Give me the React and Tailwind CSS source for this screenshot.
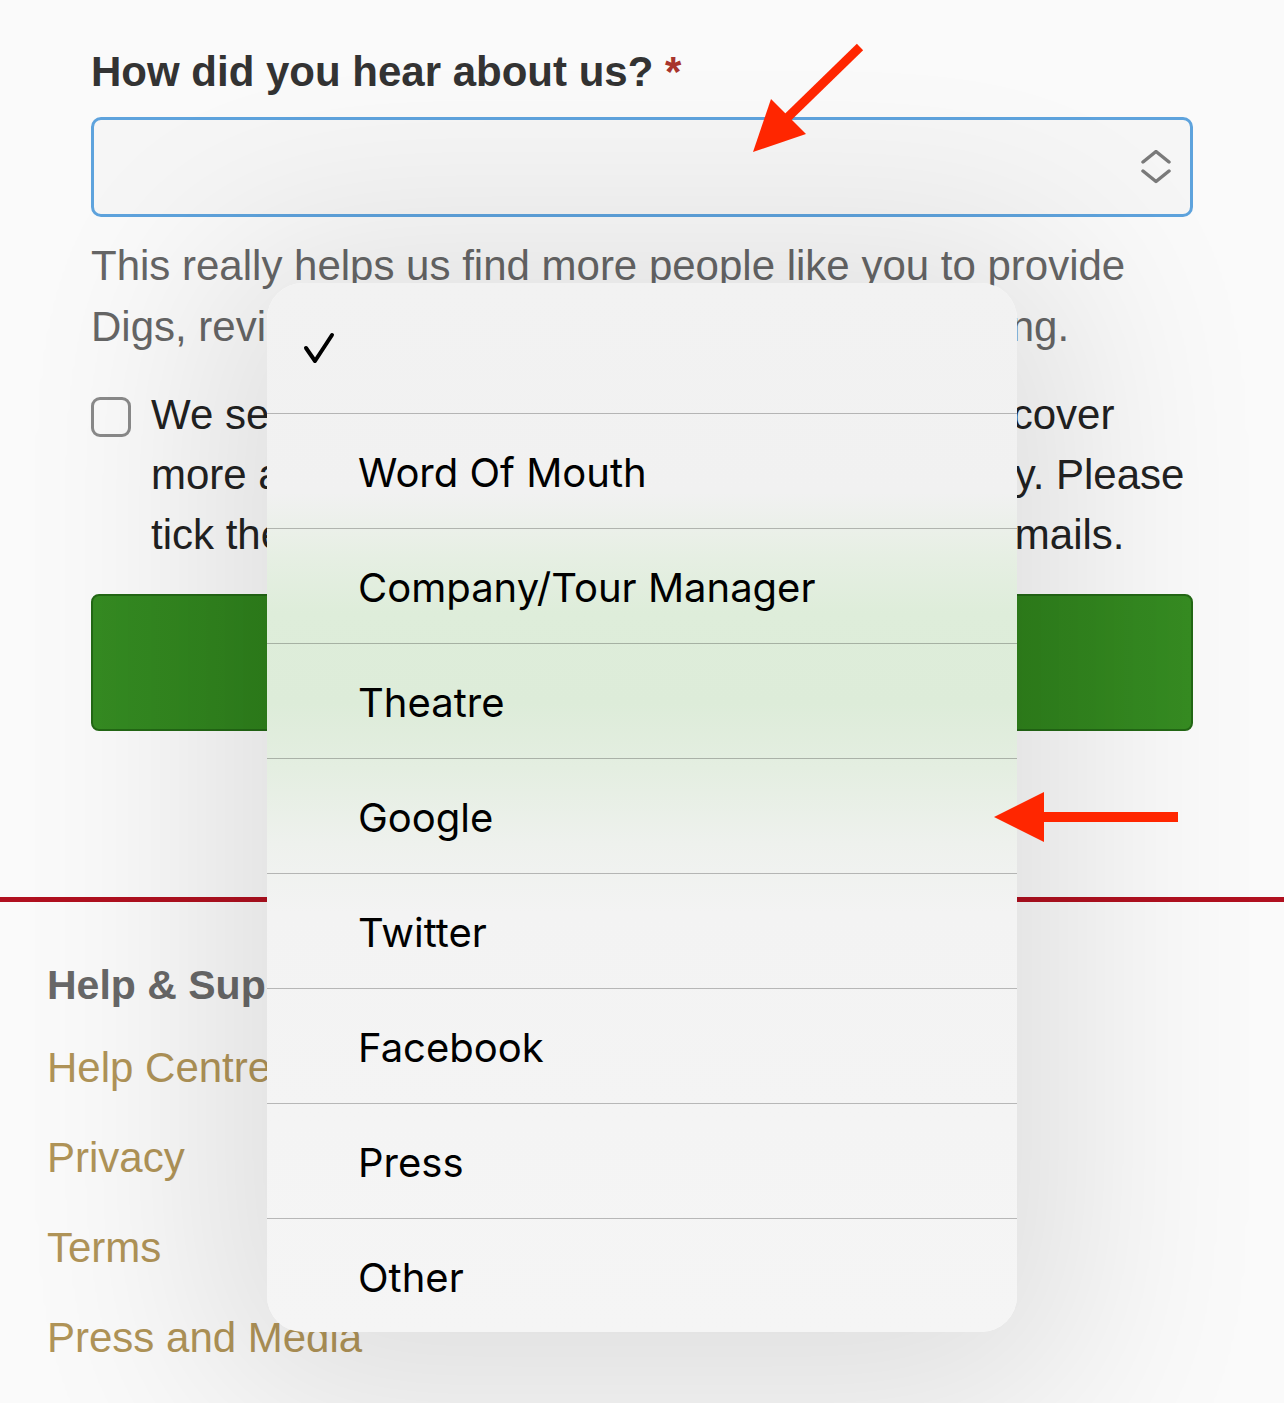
const options = ['Word Of Mouth', 'Company/Tour Manager', 'Theatre', 'Google', 'Twitter', 'Facebook', 'Press', 'Other'];

const footerLinks = ['Help Centre', 'Privacy', 'Terms', 'Press and Media'];

export default function App() {
  return (
    <div className="relative h-[1403px] w-full overflow-hidden bg-[#fafafa] font-['Liberation_Sans',Arial,sans-serif]">
      {/* Form */}
      <div className="px-[91px] pt-[47px]">
        <label className="block text-[42px] font-bold leading-[50px] text-[#333]">
          How did you hear about us? <span className="text-[#a8352d]">*</span>
        </label>
        <div className="mt-[20px] flex h-[100px] items-center justify-end rounded-[10px] border-[3px] border-[#5ea3dd] bg-[#f6f6f6] pr-[19px]">
          <svg width="30" height="34" viewBox="0 0 30 34" fill="none" stroke="#7a7a7a" strokeWidth="3.5" strokeLinecap="round" strokeLinejoin="round">
            <path d="M2 12 L15 1.5 L28 12" />
            <path d="M2 21 L15 31.5 L28 21" />
          </svg>
        </div>
        <p className="mt-[18px] text-[42px] leading-[61px] text-[#666]">
          This really helps us find more people like you to provide Digs, reviews and new recommendations for touring.
        </p>
        <div className="mt-[28px] flex gap-[20px]">
          <div className="mt-[12px] h-[40px] w-[40px] shrink-0 rounded-[9px] border-[3px] border-[#8a8a8a]" />
          <p className="whitespace-nowrap text-[42px] leading-[60px] text-[#222]">
            We send out occasional emails to help you discover
            <br />
            more about Digs and the UK touring community. Please
            <br />
            tick the box if you would like to receive these emails.
          </p>
        </div>
        <button className="mt-[29px] h-[137px] w-full rounded-[8px] border-2 border-[#236815] bg-linear-to-r from-[#358b22] via-[#22700f] to-[#368c22] text-[42px] font-bold text-white">
          Sign Up
        </button>
      </div>

      {/* Footer */}
      <div className="mt-[166px] h-[5px] bg-[#b0101f]" />
      <footer className="px-[47px] pt-[58px]">
        <h3 className="text-[41px] font-bold leading-[50px] text-[#686868]">Help &amp; Support</h3>
        <ul className="mt-[13px]">
          {footerLinks.map((link) => (
            <li key={link} className="text-[42px] leading-[90px] text-[#b09458]">
              {link}
            </li>
          ))}
        </ul>
      </footer>

      {/* Native select picker */}
      <div className="absolute left-[267px] top-[283px] w-[750px] h-[1049px] overflow-hidden rounded-[36px] bg-[linear-gradient(to_bottom,#f2f2f2_0px,#f1f1f1_210px,#e6efe3_275px,#deedda_330px,#ddecd9_420px,#e4eee1_485px,#eef1ed_560px,#f3f3f3_630px,#f5f5f5_1049px)] shadow-[0_20px_200px_60px_rgba(0,0,0,0.11)] font-['Inter',sans-serif] text-black">
        <div className="flex h-[130px] items-center pl-[36px]">
          <svg width="32" height="32" viewBox="0 0 32 32" fill="none" stroke="#000" strokeWidth="4" strokeLinecap="round" strokeLinejoin="round">
            <path d="M3 16 L12 29 L29 3" />
          </svg>
        </div>
        {options.map((opt) => (
          <div key={opt} className="flex h-[115px] items-center border-t border-[rgba(0,0,0,0.25)] pl-[91px] pt-[3px] text-[40px]">
            {opt}
          </div>
        ))}
      </div>

      {/* Annotation arrows */}
      <svg className="pointer-events-none absolute inset-0" width="1284" height="1403" viewBox="0 0 1284 1403">
        <path d="M860 47 L786 119" stroke="#ff2600" strokeWidth="9" />
        <polygon points="753,152 771,99 806,134" fill="#ff2600" />
        <rect x="1040" y="812" width="138" height="10" fill="#ff2600" />
        <polygon points="994,817 1044,792 1044,842" fill="#ff2600" />
      </svg>
    </div>
  );
}
